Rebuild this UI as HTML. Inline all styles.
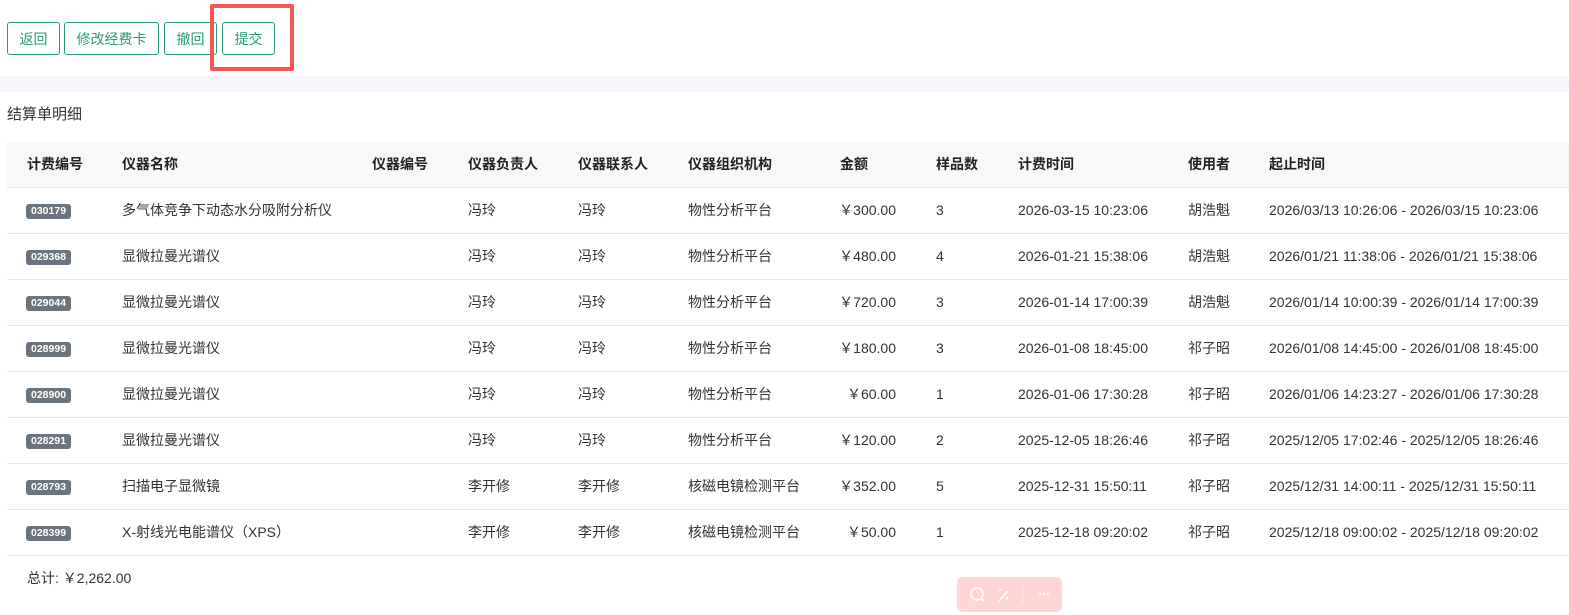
<!DOCTYPE html>
<html><head><meta charset="utf-8"><style>
body{margin:0;width:1569px;height:612px;overflow:hidden;background:#fff;font-family:"Liberation Sans","Noto Sans CJK SC",sans-serif;font-size:14px;color:#333;position:relative}
.btn{position:absolute;top:22px;height:33px;border:1px solid #2a9a78;border-radius:3px;color:#2a9a78;box-sizing:border-box;display:flex;align-items:center;justify-content:center;font-size:14px;background:#fff}
.red{position:absolute;left:210px;top:4px;width:84px;height:67px;border:4px solid #f55656;box-sizing:border-box;border-radius:2px}
.band{position:absolute;left:0;top:76px;width:1569px;height:16px;background:#f5f6f9}
.title{position:absolute;left:7px;top:103px;font-size:15px;color:#333}
.row{position:absolute;left:7px;width:1562px;height:46px;border-bottom:1px solid #e6e6e6;box-sizing:border-box}
.row span{position:absolute;top:0;line-height:45px;white-space:nowrap}
.hd{background:#f8f8f8;font-weight:bold;color:#222}
.tag{display:inline-block;background:#6c757d;color:#fff;font-size:10.5px;font-weight:bold;border-radius:3px;line-height:15px;padding:0 5px;vertical-align:middle;font-style:normal}
.amt{text-align:right;width:80px}
.tb{position:absolute;left:957px;top:577px;width:105px;height:35px;background:#ffd6d6;border-radius:6px}
</style></head><body>
<div class="btn" style="left:7px;width:53px">返回</div>
<div class="btn" style="left:64px;width:95px">修改经费卡</div>
<div class="btn" style="left:164px;width:53px">撤回</div>
<div class="btn" style="left:222px;width:53px">提交</div>
<div class="red"></div>
<div class="band"></div>
<div class="title">结算单明细</div>
<div class="row hd" style="top:142px"><span style="left:20px">计费编号</span><span style="left:115px">仪器名称</span><span style="left:365px">仪器编号</span><span style="left:461px">仪器负责人</span><span style="left:571px">仪器联系人</span><span style="left:681px">仪器组织机构</span><span style="left:833px">金额</span><span style="left:929px">样品数</span><span style="left:1011px">计费时间</span><span style="left:1181px">使用者</span><span style="left:1262px">起止时间</span></div>
<div id="rows"></div>
<div style="position:absolute;left:27px;top:568px">总计: ￥2,262.00</div>
<div class="tb"><svg width="105" height="35" viewBox="0 0 105 35"><circle cx="20" cy="17" r="6" fill="none" stroke="#fff" stroke-width="1.6"/><line x1="24" y1="21" x2="27" y2="24" stroke="#fff" stroke-width="1.6"/><line x1="42" y1="24" x2="51" y2="14" stroke="#fff" stroke-width="1.6"/><circle cx="43" cy="13" r="1" fill="#fff"/><circle cx="50" cy="21" r="1" fill="#fff"/><line x1="66" y1="9" x2="66" y2="26" stroke="#ffe8e8"/><circle cx="83" cy="17" r="1" fill="#fff"/><circle cx="87" cy="17" r="1" fill="#fff"/><circle cx="91" cy="17" r="1" fill="#fff"/></svg></div>
<script>
var d=[["030179","多气体竞争下动态水分吸附分析仪","冯玲","冯玲","物性分析平台","￥300.00","3","2026-03-15 10:23:06","胡浩魁","2026/03/13 10:26:06 - 2026/03/15 10:23:06"],
["029368","显微拉曼光谱仪","冯玲","冯玲","物性分析平台","￥480.00","4","2026-01-21 15:38:06","胡浩魁","2026/01/21 11:38:06 - 2026/01/21 15:38:06"],
["029044","显微拉曼光谱仪","冯玲","冯玲","物性分析平台","￥720.00","3","2026-01-14 17:00:39","胡浩魁","2026/01/14 10:00:39 - 2026/01/14 17:00:39"],
["028999","显微拉曼光谱仪","冯玲","冯玲","物性分析平台","￥180.00","3","2026-01-08 18:45:00","祁子昭","2026/01/08 14:45:00 - 2026/01/08 18:45:00"],
["028900","显微拉曼光谱仪","冯玲","冯玲","物性分析平台","￥60.00","1","2026-01-06 17:30:28","祁子昭","2026/01/06 14:23:27 - 2026/01/06 17:30:28"],
["028291","显微拉曼光谱仪","冯玲","冯玲","物性分析平台","￥120.00","2","2025-12-05 18:26:46","祁子昭","2025/12/05 17:02:46 - 2025/12/05 18:26:46"],
["028793","扫描电子显微镜","李开修","李开修","核磁电镜检测平台","￥352.00","5","2025-12-31 15:50:11","祁子昭","2025/12/31 14:00:11 - 2025/12/31 15:50:11"],
["028399","X-射线光电能谱仪（XPS）","李开修","李开修","核磁电镜检测平台","￥50.00","1","2025-12-18 09:20:02","祁子昭","2025/12/18 09:00:02 - 2025/12/18 09:20:02"]];
var h="";d.forEach(function(r,i){h+='<div class="row" style="top:'+(188+i*46)+'px"><span style="left:19px"><i class="tag">'+r[0]+'</i></span><span style="left:115px">'+r[1]+'</span><span style="left:461px">'+r[2]+'</span><span style="left:571px">'+r[3]+'</span><span style="left:681px">'+r[4]+'</span><span class="amt" style="left:809px">'+r[5]+'</span><span style="left:929px">'+r[6]+'</span><span style="left:1011px">'+r[7]+'</span><span style="left:1181px">'+r[8]+'</span><span style="left:1262px">'+r[9]+'</span></div>'});
document.getElementById("rows").innerHTML=h;
</script>
</body></html>
